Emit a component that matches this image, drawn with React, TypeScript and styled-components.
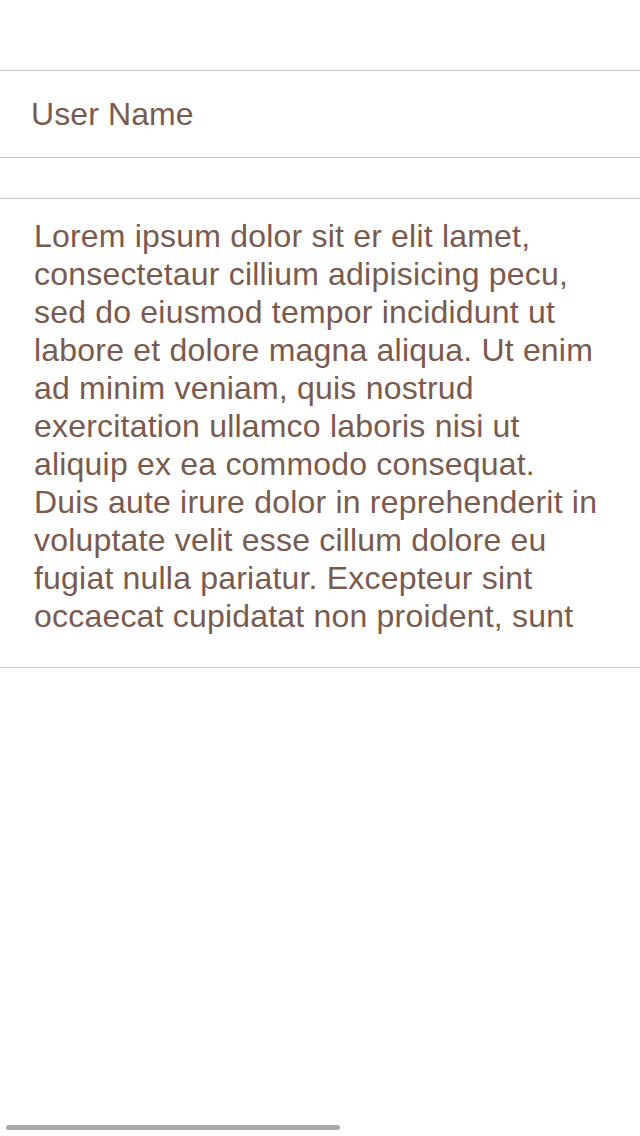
import React from "react";
import styled, { createGlobalStyle } from "styled-components";

const Global = createGlobalStyle`
  html, body { margin: 0; padding: 0; background: #ffffff; }
  body { font-family: "Liberation Sans", Arial, Helvetica, sans-serif; }
`;

const Screen = styled.div`
  position: relative;
  width: 640px;
  height: 1136px;
  background: #ffffff;
  overflow: hidden;
  display: flex;
  flex-direction: column;
`;

const TopSpace = styled.div`
  height: 70px;
  flex: none;
`;

const Section = styled.div`
  border-top: 1px solid #c8c8c8;
  border-bottom: 1px solid #c8c8c8;
  flex: none;
`;

const FieldRow = styled.div`
  height: 86px;
  display: flex;
  align-items: center;
  padding: 0 31px;
  font-size: 32px;
  line-height: 38px;
  letter-spacing: 0.1px;
  color: #7a5a4e;
`;

const Gap = styled.div`
  height: 40px;
  flex: none;
`;

const TextBlock = styled.div`
  height: 468px;
  box-sizing: border-box;
  padding: 18px 38px 0 34px;
  font-size: 32px;
  line-height: 38px;
  letter-spacing: 0.2px;
  color: #7a5a4e;
`;

const ScrollIndicator = styled.div`
  position: absolute;
  left: 6px;
  top: 1125px;
  width: 334px;
  height: 5px;
  border-radius: 3px;
  background: #a8a8a8;
`;

export default function App() {
  return (
    <>
      <Global />
      <Screen>
        <TopSpace />
        <Section>
          <FieldRow>User Name</FieldRow>
        </Section>
        <Gap />
        <Section>
          <TextBlock>
            Lorem ipsum dolor sit er elit lamet, consectetaur cillium adipisicing pecu, sed do eiusmod tempor incididunt ut labore et dolore magna aliqua. Ut enim ad minim veniam, quis nostrud exercitation ullamco laboris nisi ut aliquip ex ea commodo consequat. Duis aute irure dolor in reprehenderit in voluptate velit esse cillum dolore eu fugiat nulla pariatur. Excepteur sint occaecat cupidatat non proident, sunt
          </TextBlock>
        </Section>
        <ScrollIndicator />
      </Screen>
    </>
  );
}
